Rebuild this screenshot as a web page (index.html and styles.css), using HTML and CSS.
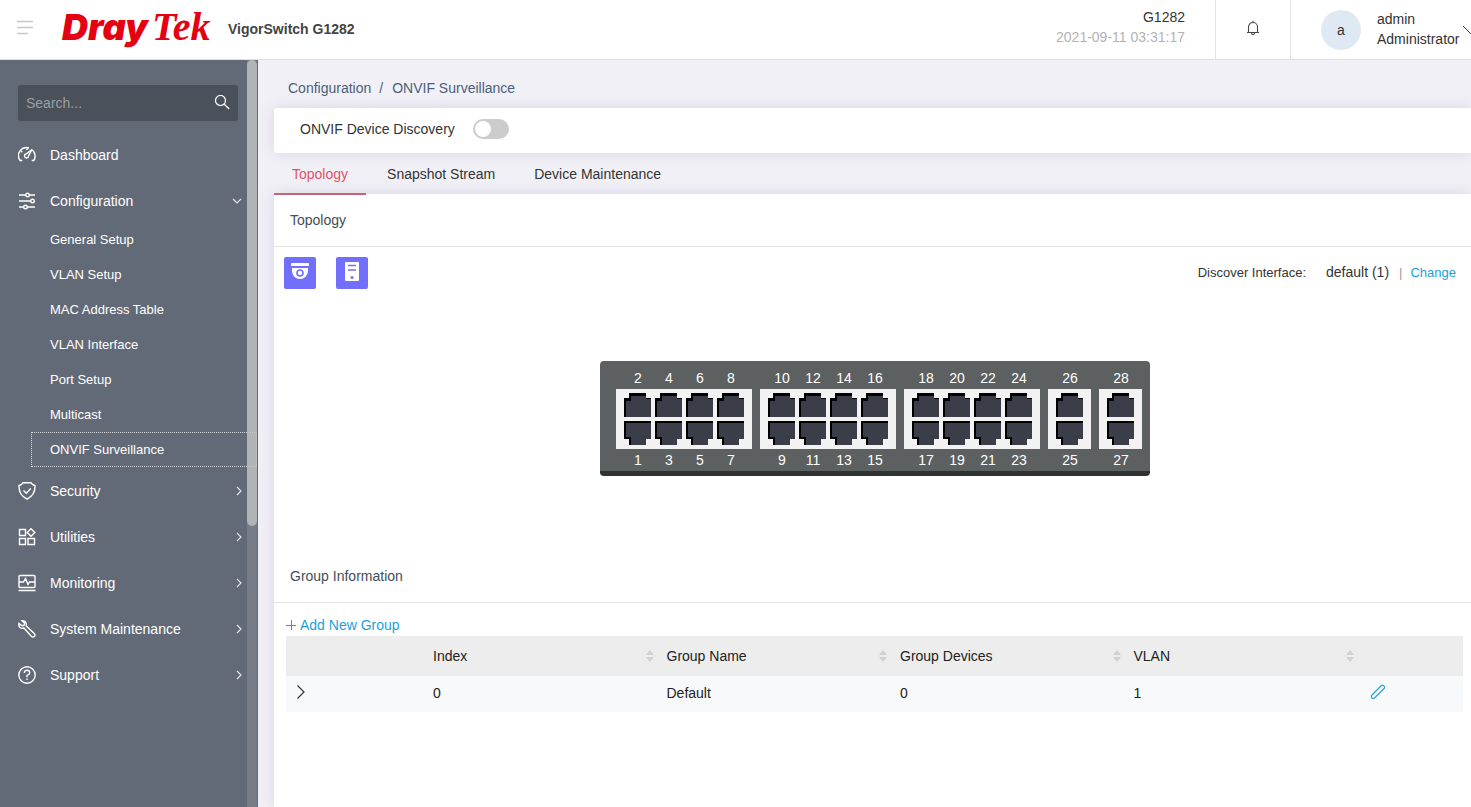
FILE: index.html
```html
<!DOCTYPE html>
<html lang="en">
<head>
    <meta charset="UTF-8">
    <meta name="viewport" content="width=device-width, initial-scale=1.0">
    <title>VigorSwitch G1282</title>
    <link rel="stylesheet" href="styles.css">
</head>
<body>

    <header class="topbar">
        <button class="icon-btn menu-toggle" aria-label="Toggle menu">
            <svg width="16" height="16" viewBox="0 0 16 16"><path d="M0 1.500h16M0 7.500h16M0 13.500h11" stroke="#c8c8c8" fill="none" stroke-width="1.300"/></svg>
        </button>
        <a class="logo" href="#"><span class="logo-dray">Dray</span><span class="logo-tek">Tek</span></a>
        <strong class="model">VigorSwitch G1282</strong>
        <div class="device">
            <span>G1282</span>
            <time>2021-09-11 03:31:17</time>
        </div>
        <button class="icon-btn bell" aria-label="Notifications">
            <svg width="14" height="16" viewBox="0 0 14 16"><path d="M1 12.500h12M2.500 12.500V7a4.500 4.500 0 0 1 9 0v5.500M7 2.500V.8M5.500 13q0 1.500 1.500 1.500T8.500 13" stroke="#444" fill="none" stroke-width="1.100"/></svg>
        </button>
        <div class="user">
            <span class="avatar">a</span>
            <div class="user-name">
                <span>admin</span>
                <span>Administrator</span>
            </div>
            <svg class="user-arrow" width="16" height="10" viewBox="0 0 16 10"><path d="M0 1l8 8 8-8" stroke="#444" fill="none"/></svg>
        </div>
    </header>

    <div class="layout">
        <nav class="sidebar">
            <form class="search">
                <input type="text" placeholder="Search..." aria-label="Search">
                <button class="icon-btn" type="button" aria-label="Search">
                    <svg width="16" height="16" viewBox="0 0 16 16"><g stroke="#fff" fill="none" stroke-width="1.200"><circle cx="6.500" cy="5.500" r="5"/><path d="M10.200 9.200l5 4.800"/></g></svg>
                </button>
            </form>
            <ul class="menu">
                <li><a class="item" href="#">
                    <svg class="ico" viewBox="0 0 18 18"><path d="M4.300 14.500H2.200A8 8 0 0 1 11 2M14 3.800a8 8 0 0 1 1.800 10.700h-2.100M9 2v2M3.200 5.200l1.200 1M14 3.500L10.500 10a2 2 0 1 1-2.500-2z"/></svg>
                    Dashboard</a></li>
                <li><a class="item" href="#">
                    <svg class="ico" viewBox="0 0 18 18"><path d="M1 3h6.500M11.500 3H17M1 9h11.500M1 15h4.500M9.500 15H17"/><circle cx="9.500" cy="3" r="1.800"/><circle cx="14.500" cy="9" r="1.800"/><circle cx="7.500" cy="15" r="1.800"/></svg>
                    Configuration
                    <svg class="arrow down" viewBox="0 0 10 10"><path d="M1 3l4 4 4-4"/></svg></a>
                    <ul class="submenu">
                        <li><a href="#">General Setup</a></li>
                        <li><a href="#">VLAN Setup</a></li>
                        <li><a href="#">MAC Address Table</a></li>
                        <li><a href="#">VLAN Interface</a></li>
                        <li><a href="#">Port Setup</a></li>
                        <li><a href="#">Multicast</a></li>
                        <li><a class="current" href="#">ONVIF Surveillance</a></li>
                    </ul>
                </li>
                <li><a class="item" href="#">
                    <svg class="ico" viewBox="0 0 18 18"><path d="M5 .8h8q1.500 2.200 4 2.700.5 9.500-8 13.700Q.5 13 1 3.500 3.500 3 5 .8zM5.500 8.500l2.700 2.700 4.600-4.700"/></svg>
                    Security
                    <svg class="arrow" viewBox="0 0 10 10"><path d="M3 1l4 4-4 4"/></svg></a></li>
                <li><a class="item" href="#">
                    <svg class="ico" viewBox="0 0 18 18"><path d="M1.500 1.500h6v6h-6zM1.500 10.500h6v6h-6zM10 10.500h6.500v6H10zM13 .7l3.800 3.800L13 8.300 9.200 4.500z"/></svg>
                    Utilities
                    <svg class="arrow" viewBox="0 0 10 10"><path d="M3 1l4 4-4 4"/></svg></a></li>
                <li><a class="item" href="#">
                    <svg class="ico" viewBox="0 0 18 18"><path d="M2 1.500h14q1 0 1 1v10q0 1-1 1H2q-1 0-1-1v-10q0-1 1-1zM.5 16.500h17M1 8h4.500l2-3.500 2.500 6L11.500 8H17"/></svg>
                    Monitoring
                    <svg class="arrow" viewBox="0 0 10 10"><path d="M3 1l4 4-4 4"/></svg></a></li>
                <li><a class="item" href="#">
                    <svg class="ico" viewBox="0 0 18 18"><path d="M4 .8l2.500 2.500-.5 2-2 .5L1 3.500Q.3 6 2 7.500t4 .5l7.500 8.500q1.500 1.200 2.800 0t.2-2.700L8.200 6Q8.700 3.500 7.500 2T4 .8z"/></svg>
                    System Maintenance
                    <svg class="arrow" viewBox="0 0 10 10"><path d="M3 1l4 4-4 4"/></svg></a></li>
                <li><a class="item" href="#">
                    <svg class="ico" viewBox="0 0 18 18"><circle cx="9" cy="9" r="8.200"/><path d="M6.300 7q0-2.700 2.700-2.700T11.700 7Q11.700 8.500 9 9.300v1.900M9 12.500v1.500"/></svg>
                    Support
                    <svg class="arrow" viewBox="0 0 10 10"><path d="M3 1l4 4-4 4"/></svg></a></li>
            </ul>
            <div class="scrollbar"><div class="thumb"></div></div>
        </nav>

        <main class="content">
            <div class="breadcrumb"><a href="#">Configuration</a><span>/</span><a href="#">ONVIF Surveillance</a></div>

            <section class="card discovery">
                <label for="discovery">ONVIF Device Discovery</label>
                <input class="switch" type="checkbox" id="discovery">
            </section>

            <div class="tabs">
                <button class="tab active">Topology</button>
                <button class="tab">Snapshot Stream</button>
                <button class="tab">Device Maintenance</button>
            </div>

            <section class="card panel">
                <h2>Topology</h2>
                <div class="toolbar">
                    <button class="tool" aria-label="Cameras">
                        <svg width="20" height="20" viewBox="0 0 20 20"><rect x="1" y="1" width="18" height="3" rx=".5" fill="#fff"/><path d="M2 6h16v3a8 8 0 0 1-16 0z" fill="#fff"/><circle cx="10" cy="11" r="3" fill="none" stroke="#716ffb" stroke-width="1.600"/></svg>
                    </button>
                    <button class="tool" aria-label="Recorders">
                        <svg width="20" height="20" viewBox="0 0 20 20"><rect x="3" width="14" height="19" rx="1" fill="#fff"/><path d="M6 3.500h8M6 8h8" stroke="#716ffb" stroke-width="1.600"/><circle cx="10" cy="15.500" r="1.500" fill="#716ffb"/></svg>
                    </button>
                    <div class="interface">
                        <span>Discover Interface:</span>
                        <span class="value">default (1)</span>
                        <span class="divider">|</span>
                        <a href="#">Change</a>
                    </div>
                </div>

                <div class="topology">
                    <div class="device-front" id="ports"></div>
                </div>

                <h2>Group Information</h2>
                <div class="groups">
                    <button class="add">
                        <svg width="10" height="10" viewBox="0 0 10 10"><path d="M0 5.500h10M5.500 0v10" stroke="#1b9fd8"/></svg>
                        Add New Group
                    </button>
                    <table>
                        <thead>
                            <tr>
                                <th class="col-expand"></th>
                                <th><span class="head">Index <svg class="sort" viewBox="0 0 10 12"><path d="M5 0l4 5H1zM5 12l4-5H1z"/></svg></span></th>
                                <th><span class="head">Group Name <svg class="sort" viewBox="0 0 10 12"><path d="M5 0l4 5H1zM5 12l4-5H1z"/></svg></span></th>
                                <th><span class="head">Group Devices <svg class="sort" viewBox="0 0 10 12"><path d="M5 0l4 5H1zM5 12l4-5H1z"/></svg></span></th>
                                <th><span class="head">VLAN <svg class="sort" viewBox="0 0 10 12"><path d="M5 0l4 5H1zM5 12l4-5H1z"/></svg></span></th>
                                <th class="col-edit"></th>
                            </tr>
                        </thead>
                        <tbody>
                            <tr>
                                <td><button class="icon-btn" aria-label="Expand"><svg width="10" height="16" viewBox="0 0 10 16"><path d="M1.500 1.500L8 8l-6.500 6.500" stroke="#333" fill="none" stroke-width="1.200"/></svg></button></td>
                                <td>0</td>
                                <td>Default</td>
                                <td>0</td>
                                <td>1</td>
                                <td class="edit"><button class="icon-btn" aria-label="Edit"><svg width="16" height="16" viewBox="0 0 16 16"><path d="M1.500 11.500L11.500 1.500q1-.8 2 0l.8.8q.8 1 0 2L4.500 14q-1.500 1-2.500 0t-.5-2.500z" stroke="#2ba3d4" fill="none" stroke-width="1.200"/></svg></button></td>
                            </tr>
                        </tbody>
                    </table>
                </div>
            </section>
        </main>
    </div>

    <script>
        // first and last port number of every block on the front panel
        const blocks = [[1, 8], [9, 16], [17, 24], [25, 26], [27, 28]];

        const upper = `<svg class="port" viewBox="0 0 27 24"><path d="M5 0h17v5h5v19H0V5h5z"/><path class="hole" d="M7 3h15v3h5v18H2V8h5z"/></svg>`;
        const lower = `<svg class="port" viewBox="0 0 27 24"><path d="M0 0h27v18h-5v6H5v-6H0z"/><path class="hole" d="M2 2h25v16h-5v6H7v-8H2z"/></svg>`;

        document.getElementById("ports").innerHTML = blocks.map(([first, last]) => {
            let even = "", odd = "", top = "", bottom = "";
            for (let n = first; n < last; n += 2) {
                odd += `<span>${n}</span>`;
                even += `<span>${n + 1}</span>`;
                top += upper;
                bottom += lower;
            }
            return `<div class="block">
                <div class="numbers">${even}</div>
                <div class="sockets"><div class="row">${top}</div><div class="row">${bottom}</div></div>
                <div class="numbers">${odd}</div>
            </div>`;
        }).join("");
    </script>

</body>
</html>
```
FILE: styles.css
```css
* {
    box-sizing: border-box;
}
body {
    margin: 0;
    min-height: 100vh;
    display: flex;
    flex-direction: column;
    font-family: Arial, "Liberation Sans", sans-serif;
    font-size: 14px;
    color: #333;
    background: #f1f0f6;
    overflow-x: hidden;
}
a {
    color: inherit;
    text-decoration: none;
}
button, input {
    font: inherit;
    color: inherit;
}
button {
    cursor: pointer;
}
ul {
    list-style: none;
    margin: 0;
    padding: 0;
}
svg {
    display: block;
    flex: none;
}
.icon-btn {
    border: 0;
    padding: 0;
    background: none;
}

/* top bar */
.topbar {
    display: flex;
    align-items: center;
    height: 60px;
    padding-left: 17px;
    background: #fff;
    border-bottom: 1px solid #e0e0e2;
    overflow: hidden;
}
.menu-toggle {
    padding-bottom: 4px;
}
.logo {
    display: flex;
    align-items: baseline;
    gap: 4px;
    width: 150px;
    margin: 0 16px 0 29px;
    padding-bottom: 6px;
    color: #e50012;
    white-space: nowrap;
}
.logo-dray {
    font: italic 900 36px/50px Inter, sans-serif;
}
.logo-tek {
    font: italic bold 40px/50px "Liberation Serif", serif;
}
.model {
    padding-bottom: 2px;
    color: #444;
}
.device {
    display: flex;
    flex-direction: column;
    margin-left: auto;
    padding: 0 30px 5px 0;
    line-height: 20px;
    text-align: right;
}
.device time {
    color: #b3b3b3;
}
.bell {
    display: flex;
    align-items: center;
    justify-content: center;
    align-self: stretch;
    width: 76px;
    padding-bottom: 4px;
    border: 1px solid #e4e4e6;
    border-width: 0 1px;
}
.user {
    display: flex;
    align-items: center;
    width: 180px;
    padding-left: 30px;
}
.avatar {
    flex: none;
    width: 40px;
    margin-right: 16px;
    border-radius: 50%;
    background: #dfe9f3;
    line-height: 40px;
    text-align: center;
}
.user-name {
    display: flex;
    flex-direction: column;
    padding-bottom: 2px;
    line-height: 20px;
}
.user-arrow {
    margin-left: 4px;
}

.layout {
    display: flex;
    flex: 1;
}

/* sidebar */
.sidebar {
    position: relative;
    flex: none;
    width: 258px;
    padding-top: 25px;
    background: #636a77;
    color: #fff;
}
.search {
    display: flex;
    align-items: center;
    height: 36px;
    margin: 0 20px 11px 18px;
    padding: 0 8px;
    border-radius: 3px;
    background: #4a515b;
}
.search input {
    flex: 1;
    min-width: 0;
    padding: 0;
    border: 0;
    outline: 0;
    background: none;
}
.search input::placeholder {
    color: #9c9fa3;
}
.item {
    display: flex;
    align-items: center;
    height: 46px;
    padding: 0 14px 0 18px;
}
.ico {
    width: 18px;
    height: 18px;
    margin-right: 14px;
    fill: none;
    stroke: #fff;
    stroke-width: 1.4;
}
.arrow {
    width: 10px;
    height: 10px;
    margin-left: auto;
    fill: none;
    stroke: #e6e8ea;
    stroke-width: 1.1;
}
.arrow.down {
    margin-right: 2px;
}
.submenu {
    margin-top: -2px;
    padding-bottom: 1px;
    font-size: 13px;
}
.submenu a {
    display: block;
    margin: 0 1px 0 31px;
    padding-left: 19px;
    line-height: 35px;
}
.submenu .current {
    outline: 1px dotted #d5d8dc;
    outline-offset: -1px;
}
.scrollbar {
    position: absolute;
    top: 0;
    right: 1px;
    bottom: 0;
    width: 10px;
    background: rgba(255, 255, 255, 0.13);
}
.thumb {
    height: 466px;
    border-radius: 5px;
    background: rgba(190, 194, 194, 0.8);
}

/* content */
.content {
    flex: 1;
    display: flex;
    flex-direction: column;
    min-width: 0;
    padding-left: 16px;
}
.breadcrumb {
    display: flex;
    padding: 8px 14px 0;
    line-height: 40px;
    color: #4c5f78;
}
.breadcrumb span {
    margin: 0 9px 0 8px;
}
.card {
    background: #fff;
    box-shadow: 0 0 14px rgba(110, 90, 160, 0.18);
}
.discovery {
    display: flex;
    align-items: center;
    height: 45px;
    padding: 0 26px 4px;
    border-radius: 3px 0 0 3px;
}
.switch {
    appearance: none;
    width: 36px;
    height: 20px;
    margin: 0 0 0 18px;
    padding: 2px;
    border-radius: 10px;
    background: #ccc;
    cursor: pointer;
}
.switch::before {
    content: "";
    display: block;
    width: 16px;
    height: 16px;
    border-radius: 50%;
    background: #fff;
}
.switch:checked {
    background: #716ffb;
}
.switch:checked::before {
    margin-left: 16px;
}
.tabs {
    display: flex;
    gap: 3px;
    height: 42px;
    z-index: 1;
}
.tab {
    padding: 2px 18px 0;
    border: 0;
    border-bottom: 2px solid transparent;
    background: none;
}
.tab.active {
    color: #dd5468;
    border-color: #cb6374;
}
.panel {
    flex: 1;
    margin-top: -1px;
}
.panel h2 {
    margin: 0;
    padding-left: 16px;
    border-bottom: 1px solid #e4e4e6;
    font-size: 14px;
    font-weight: normal;
    line-height: 52px;
    color: #454d5a;
}
.toolbar {
    display: flex;
    gap: 20px;
    padding: 10px 15px 0 10px;
}
.tool {
    display: flex;
    align-items: center;
    justify-content: center;
    width: 32px;
    height: 32px;
    padding: 0 0 2px;
    border: 0;
    border-radius: 2px;
    background: #716ffb;
}
.interface {
    display: flex;
    align-items: center;
    margin-left: auto;
    padding-bottom: 2px;
    font-size: 13px;
}
.interface .value {
    margin-left: 20px;
    font-size: 14px;
}
.interface .divider {
    margin: 0 8px 0 10px;
    color: #999;
}
.interface a {
    color: #1b9fd8;
}

/* switch front panel */
.topology {
    display: flex;
    justify-content: center;
    padding: 72px 8px 74px 12px;
}
.device-front {
    display: flex;
    gap: 8px;
    padding: 6px 8px 0 16px;
    border-bottom: 5px solid #303131;
    border-radius: 4px;
    background: #5c6060;
}
.numbers {
    display: flex;
    gap: 4px;
    padding: 0 7px 0 9px;
    line-height: 22px;
    color: #fff;
}
.numbers span {
    width: 27px;
    text-align: center;
}
.sockets {
    display: grid;
    gap: 4px;
    padding: 4px 8px;
    background: #f2f2f2;
}
.row {
    display: flex;
    gap: 4px;
}
.port {
    width: 27px;
    height: 24px;
}
.hole {
    fill: #3b3e49;
}

/* groups */
.groups {
    padding: 11px 8px 0 12px;
}
.add {
    display: flex;
    align-items: center;
    gap: 4px;
    padding: 0;
    border: 0;
    background: none;
    line-height: 22px;
    color: #1b9fd8;
}
table {
    width: 100%;
    table-layout: fixed;
    border-collapse: collapse;
    color: #222;
}
th, td {
    padding: 0 0 0 10px;
    font-weight: normal;
    text-align: left;
}
th {
    height: 40px;
    background: #ededed;
}
td {
    height: 36px;
    padding-bottom: 2px;
    background: #f8f9fb;
}
.col-expand {
    width: 137px;
}
.col-edit {
    width: 106px;
}
.head {
    display: flex;
    align-items: center;
    justify-content: space-between;
    padding-right: 2px;
}
.sort {
    width: 10px;
    height: 12px;
    fill: #d2d2d4;
}
.edit {
    padding-left: 13px;
}
```
